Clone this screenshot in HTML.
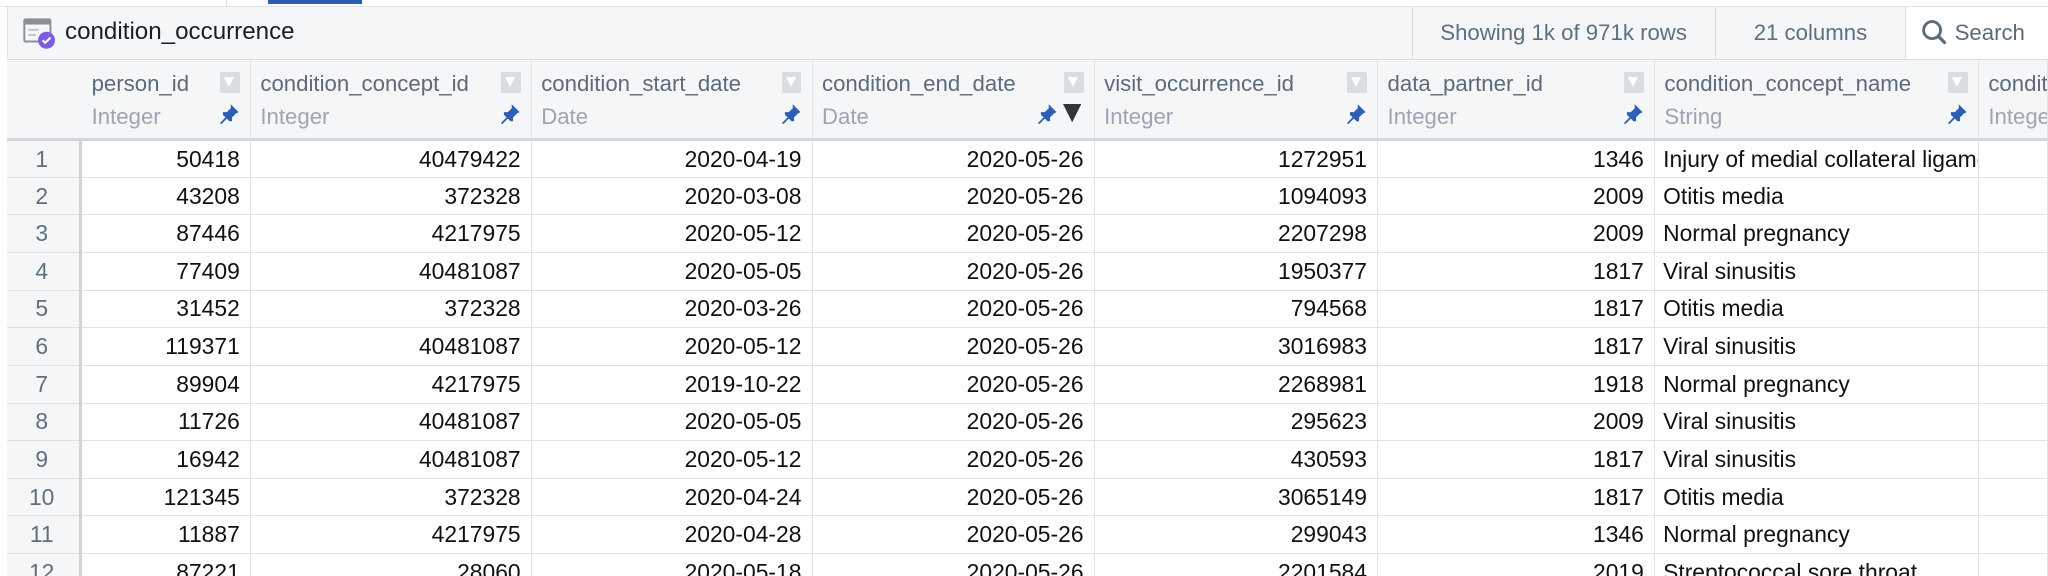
<!DOCTYPE html>
<html><head><meta charset="utf-8">
<style>
html,body{margin:0;padding:0;background:#fff;}
#w{zoom:1.30612;width:1568px;height:441px;overflow:hidden;position:relative;font-family:"Liberation Sans",sans-serif;background:#fff;}
.top{position:absolute;left:0;top:0;width:1568px;height:5px;background:#fff;border-bottom:1px solid #dfe2e6;box-sizing:border-box}
.tab{position:absolute;left:205px;top:0;width:72px;height:3px;background:#2a5db0}
.tabl{position:absolute;left:173px;top:0;width:1px;height:5px;background:#dfe2e6}
.hdr{position:absolute;left:5px;top:5px;width:1563px;height:41px;background:#f5f6f8;border-left:1px solid #dfe2e6;border-bottom:1px solid #d8dce0;box-sizing:border-box}
.title{position:absolute;left:44px;top:9px;font-size:18.5px;color:#182026}
.box{position:absolute;top:0;height:40px;border-left:1px solid #d8dce0;font-size:17px;color:#5c7080;line-height:40px;text-align:center;box-sizing:border-box}
table{position:absolute;left:5px;top:46px;border-collapse:collapse;table-layout:fixed;width:1563px;font-size:17.5px}
td,th{padding:0;overflow:hidden;white-space:nowrap;box-sizing:border-box}
th{background:#f5f6f8;height:61px;border-right:1px solid #e1e4e8;text-align:left;font-weight:normal;vertical-align:top;position:relative;border-bottom:3px solid #d3d6da}
th .n{position:absolute;left:7px;top:8px;font-size:17px;color:#5c6b7a}
th .t{position:absolute;left:7px;top:34px;font-size:17px;color:#9aa6b2}
th .f{position:absolute;right:8px;top:9px;width:15px;height:16px;background:#d8dde2}
th .f:after{content:"";position:absolute;left:3px;top:4px;border-left:4.5px solid transparent;border-right:4.5px solid transparent;border-top:8px solid #fff}
th .p{position:absolute;right:8px;top:33px;width:16px;height:16px}
td{height:28.8px;border-bottom:1px solid #e1e1e1;border-right:1px solid #e1e1e1;color:#111;text-align:right}
td div{overflow:hidden;padding:0 8px 0 6px}
td.r{background:#f5f6f8;color:#5c7080;text-align:center;border-right:3px solid #cfd2d6}
td.s{text-align:left}
td.s div{padding:0 0 0 6px}
th.r{border-right:3px solid #f5f6f8}
</style></head><body><div id="w">
<div class="top"></div><div class="tabl"></div><div class="tab"></div>
<div class="hdr">
<svg style="position:absolute;left:12px;top:9px" width="26" height="24" viewBox="0 0 26 24"><rect x="1" y="1" width="20" height="17" rx="1" fill="#f5f6f8" stroke="#8a8f96" stroke-width="1.5"/><rect x="1" y="1" width="20" height="4" fill="#8a8f96"/><line x1="4" y1="9" x2="12" y2="9" stroke="#c0c4c8" stroke-width="1.5"/><line x1="4" y1="13" x2="10" y2="13" stroke="#c0c4c8" stroke-width="1.5"/><circle cx="18" cy="17" r="6.5" fill="#7a5de0"/><path d="M15 17l2 2 4-4" stroke="#fff" stroke-width="1.6" fill="none"/></svg>
<div class="title">condition_occurrence</div>
<div class="box" style="left:1075px;width:232px">Showing 1k of 971k rows</div>
<div class="box" style="left:1307px;width:146px">21 columns</div>
<div class="box" style="left:1453px;width:115px;background:#fff;text-align:left;padding-left:11px;color:#5c6b7a"><svg style="vertical-align:-4px;margin-right:6px" width="20" height="20" viewBox="0 0 20 20"><circle cx="8.5" cy="8.5" r="6.5" stroke="#5c6b7a" stroke-width="2.2" fill="none"/><line x1="13.3" y1="13.3" x2="18" y2="18" stroke="#5c6b7a" stroke-width="2.5" stroke-linecap="round"/></svg>Search</div>
</div>
<table>
<colgroup><col style="width:57px"><col style="width:130px"><col style="width:215px"><col style="width:215px"><col style="width:216px"><col style="width:217px"><col style="width:212px"><col style="width:248px"><col style="width:53px"></colgroup>
<tr><th class="r"></th>
<th><span class="n">person_id</span><span class="f"></span><svg class="p" viewBox="0 0 16 16"><path d="M9 1l6 6-2 1-3 3 0 3-2 0-2-2-4 4-1 0 0-1 4-4-2-2 0-2 3 0 3-3z" fill="#2d5fb5"/></svg><span class="t">Integer</span></th>
<th><span class="n">condition_concept_id</span><span class="f"></span><svg class="p" viewBox="0 0 16 16"><path d="M9 1l6 6-2 1-3 3 0 3-2 0-2-2-4 4-1 0 0-1 4-4-2-2 0-2 3 0 3-3z" fill="#2d5fb5"/></svg><span class="t">Integer</span></th>
<th><span class="n">condition_start_date</span><span class="f"></span><svg class="p" viewBox="0 0 16 16"><path d="M9 1l6 6-2 1-3 3 0 3-2 0-2-2-4 4-1 0 0-1 4-4-2-2 0-2 3 0 3-3z" fill="#2d5fb5"/></svg><span class="t">Date</span></th>
<th><span class="n">condition_end_date</span><span class="f"></span><svg class="p" style="right:28px" viewBox="0 0 16 16"><path d="M9 1l6 6-2 1-3 3 0 3-2 0-2-2-4 4-1 0 0-1 4-4-2-2 0-2 3 0 3-3z" fill="#2d5fb5"/></svg><svg style="position:absolute;right:10px;top:34px" width="14" height="14" viewBox="0 0 14 14"><path d="M0 0h14L7 14z" fill="#30353b"/></svg><span class="t">Date</span></th>
<th><span class="n">visit_occurrence_id</span><span class="f"></span><svg class="p" viewBox="0 0 16 16"><path d="M9 1l6 6-2 1-3 3 0 3-2 0-2-2-4 4-1 0 0-1 4-4-2-2 0-2 3 0 3-3z" fill="#2d5fb5"/></svg><span class="t">Integer</span></th>
<th><span class="n">data_partner_id</span><span class="f"></span><svg class="p" viewBox="0 0 16 16"><path d="M9 1l6 6-2 1-3 3 0 3-2 0-2-2-4 4-1 0 0-1 4-4-2-2 0-2 3 0 3-3z" fill="#2d5fb5"/></svg><span class="t">Integer</span></th>
<th><span class="n">condition_concept_name</span><span class="f"></span><svg class="p" viewBox="0 0 16 16"><path d="M9 1l6 6-2 1-3 3 0 3-2 0-2-2-4 4-1 0 0-1 4-4-2-2 0-2 3 0 3-3z" fill="#2d5fb5"/></svg><span class="t">String</span></th>
<th><span class="n">condition_type_concept_id</span><span class="t">Integer</span></th></tr>
<tr><td class="r"><div>1</div></td><td><div>50418</div></td><td><div>40479422</div></td><td><div>2020-04-19</div></td><td><div>2020-05-26</div></td><td><div>1272951</div></td><td><div>1346</div></td><td class="s"><div>Injury of medial collateral ligament</div></td><td></td></tr>
<tr><td class="r"><div>2</div></td><td><div>43208</div></td><td><div>372328</div></td><td><div>2020-03-08</div></td><td><div>2020-05-26</div></td><td><div>1094093</div></td><td><div>2009</div></td><td class="s"><div>Otitis media</div></td><td></td></tr>
<tr><td class="r"><div>3</div></td><td><div>87446</div></td><td><div>4217975</div></td><td><div>2020-05-12</div></td><td><div>2020-05-26</div></td><td><div>2207298</div></td><td><div>2009</div></td><td class="s"><div>Normal pregnancy</div></td><td></td></tr>
<tr><td class="r"><div>4</div></td><td><div>77409</div></td><td><div>40481087</div></td><td><div>2020-05-05</div></td><td><div>2020-05-26</div></td><td><div>1950377</div></td><td><div>1817</div></td><td class="s"><div>Viral sinusitis</div></td><td></td></tr>
<tr><td class="r"><div>5</div></td><td><div>31452</div></td><td><div>372328</div></td><td><div>2020-03-26</div></td><td><div>2020-05-26</div></td><td><div>794568</div></td><td><div>1817</div></td><td class="s"><div>Otitis media</div></td><td></td></tr>
<tr><td class="r"><div>6</div></td><td><div>119371</div></td><td><div>40481087</div></td><td><div>2020-05-12</div></td><td><div>2020-05-26</div></td><td><div>3016983</div></td><td><div>1817</div></td><td class="s"><div>Viral sinusitis</div></td><td></td></tr>
<tr><td class="r"><div>7</div></td><td><div>89904</div></td><td><div>4217975</div></td><td><div>2019-10-22</div></td><td><div>2020-05-26</div></td><td><div>2268981</div></td><td><div>1918</div></td><td class="s"><div>Normal pregnancy</div></td><td></td></tr>
<tr><td class="r"><div>8</div></td><td><div>11726</div></td><td><div>40481087</div></td><td><div>2020-05-05</div></td><td><div>2020-05-26</div></td><td><div>295623</div></td><td><div>2009</div></td><td class="s"><div>Viral sinusitis</div></td><td></td></tr>
<tr><td class="r"><div>9</div></td><td><div>16942</div></td><td><div>40481087</div></td><td><div>2020-05-12</div></td><td><div>2020-05-26</div></td><td><div>430593</div></td><td><div>1817</div></td><td class="s"><div>Viral sinusitis</div></td><td></td></tr>
<tr><td class="r"><div>10</div></td><td><div>121345</div></td><td><div>372328</div></td><td><div>2020-04-24</div></td><td><div>2020-05-26</div></td><td><div>3065149</div></td><td><div>1817</div></td><td class="s"><div>Otitis media</div></td><td></td></tr>
<tr><td class="r"><div>11</div></td><td><div>11887</div></td><td><div>4217975</div></td><td><div>2020-04-28</div></td><td><div>2020-05-26</div></td><td><div>299043</div></td><td><div>1346</div></td><td class="s"><div>Normal pregnancy</div></td><td></td></tr>
<tr><td class="r"><div>12</div></td><td><div>87221</div></td><td><div>28060</div></td><td><div>2020-05-18</div></td><td><div>2020-05-26</div></td><td><div>2201584</div></td><td><div>2019</div></td><td class="s"><div>Streptococcal sore throat</div></td><td></td></tr>
</table>
</div></body></html>
